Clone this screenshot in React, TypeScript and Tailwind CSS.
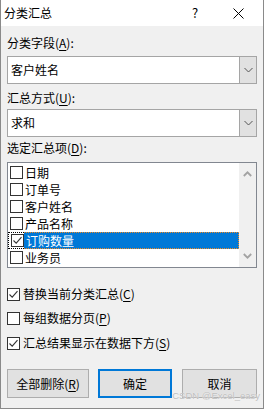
import React from "react";

const font = { fontFamily: '"Noto Sans CJK SC", "Microsoft YaHei", sans-serif' };

function U({ c }: { c: string }) {
  return <span className="underline underline-offset-2 decoration-1">{c}</span>;
}

function Check({ checked }: { checked?: boolean }) {
  return (
    <div className="w-[13px] h-[13px] border border-[#333333] bg-white flex items-center justify-center shrink-0">
      {checked && (
        <svg width="11" height="11" viewBox="0 0 11 11">
          <path d="M1.5 5.5 L4.2 8.2 L9.5 2.2" fill="none" stroke="#333333" strokeWidth="1.1" />
        </svg>
      )}
    </div>
  );
}

function Combo({ value }: { value: string }) {
  return (
    <div className="h-[28px] border border-[#a5a5a5] bg-white flex">
      <div className="flex-1 flex items-center pl-[3px] text-[12px] text-black">{value}</div>
      <div className="w-[17px] bg-[#e1e1e1] border-l border-[#a5a5a5] flex items-center justify-center">
        <svg width="9" height="6" viewBox="0 0 9 6">
          <path d="M0.5 1 L4.5 5 L8.5 1" fill="none" stroke="#555555" strokeWidth="1" />
        </svg>
      </div>
    </div>
  );
}

const items = ["日期", "订单号", "客户姓名", "产品名称", "订购数量", "业务员"];

export default function App() {
  return (
    <div
      className="w-[264px] h-[409px] bg-[#f0f0f0] border-x border-b border-[#8a8a8a] flex flex-col relative"
      style={font}
    >
      {/* Title bar */}
      <div className="h-[26px] bg-white flex items-center shrink-0">
        <span className="pl-[3px] text-[12px] text-black flex-1">分类汇总</span>
        <span className="text-[13px] text-black w-[20px] text-center mr-[28px]">?</span>
        <svg width="11" height="11" viewBox="0 0 11 11" className="mr-[19px]">
          <path d="M0.5 0.5 L10.5 10.5 M10.5 0.5 L0.5 10.5" stroke="#000" strokeWidth="1" />
        </svg>
      </div>

      <div className="flex-1 flex flex-col px-[6px] text-[12px] text-black">
        <div className="mt-[9px] h-[16px] leading-[16px]">
          分类字段(<U c="A" />):
        </div>
        <div className="mt-[5px]">
          <Combo value="客户姓名" />
        </div>

        <div className="mt-[6px] h-[16px] leading-[16px]">
          汇总方式(<U c="U" />):
        </div>
        <div className="mt-[3px]">
          <Combo value="求和" />
        </div>

        <div className="mt-[3px] h-[16px] leading-[16px]">
          选定汇总项(<U c="D" />):
        </div>
        <div className="mt-[6px] h-[106px] border border-[#828790] bg-white flex">
          <div className="flex-1 pt-[1px] flex flex-col">
            {items.map((it, i) => {
              const sel = i === 4;
              return (
                <div key={it} className="h-[17px] flex items-center">
                  <div
                    className={
                      "h-[17px] pl-[2px] pr-[0px] flex items-center " +
                      (sel ? "border-y border-l border-dotted border-black pl-[1px]" : "")
                    }
                  >
                    <Check checked={sel} />
                  </div>
                  <div
                    className={
                      "flex-1 h-[17px] flex items-center pl-[2px] " +
                      (sel
                        ? "bg-[#0078d7] text-white border-y border-r border-dotted border-[#f08a24]"
                        : "")
                    }
                  >
                    {it}
                  </div>
                </div>
              );
            })}
          </div>
          <div className="w-[17px] bg-[#f0f0f0] flex flex-col items-center justify-between py-[8px]">
            <svg width="9" height="6" viewBox="0 0 9 6">
              <path d="M0.8 5 L4.5 1.3 L8.2 5" fill="none" stroke="#a3a3a3" strokeWidth="1.8" />
            </svg>
            <svg width="9" height="6" viewBox="0 0 9 6">
              <path d="M0.8 1 L4.5 4.7 L8.2 1" fill="none" stroke="#a3a3a3" strokeWidth="1.8" />
            </svg>
          </div>
        </div>

        <div className="mt-[18px] h-[16px] flex items-center gap-[3px]">
          <Check checked />
          <span>
            替换当前分类汇总(<U c="C" />)
          </span>
        </div>
        <div className="mt-[8px] h-[16px] flex items-center gap-[3px]">
          <Check />
          <span>
            每组数据分页(<U c="P" />)
          </span>
        </div>
        <div className="mt-[9px] h-[16px] flex items-center gap-[3px]">
          <Check checked />
          <span>
            汇总结果显示在数据下方(<U c="S" />)
          </span>
        </div>

        <div className="mt-[18px] flex">
          <div className="w-[82px] h-[29px] bg-[#e1e1e1] border border-[#adadad] flex items-center justify-center">
            全部删除(<U c="R" />)
          </div>
          <div className="ml-[9px] w-[74px] h-[29px] bg-[#e1e1e1] border-2 border-[#0078d7] flex items-center justify-center">
            确定
          </div>
          <div className="ml-[10px] w-[75px] h-[29px] bg-[#e1e1e1] border border-[#adadad] flex items-center justify-center">
            取消
          </div>
        </div>
      </div>

      <div
        className="absolute right-[3px] top-[390px] whitespace-nowrap text-[9.5px] leading-[12px] text-[#bdbdbd]"
        style={{ fontFamily: '"Liberation Sans", Arial, sans-serif', textShadow: "0 0 1px #ffffff" }}
      >
        CSDN @Excel_easy
      </div>
    </div>
  );
}
